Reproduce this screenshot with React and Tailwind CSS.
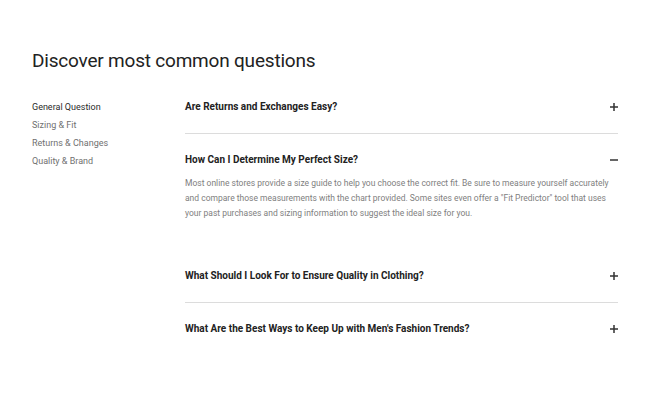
import React, { useState } from 'react';

const faqs = [
  {
    q: 'Are Returns and Exchanges Easy?',
    a: '',
  },
  {
    q: 'How Can I Determine My Perfect Size?',
    a: 'Most online stores provide a size guide to help you choose the correct fit. Be sure to measure yourself accurately and compare those measurements with the chart provided. Some sites even offer a "Fit Predictor" tool that uses your past purchases and sizing information to suggest the ideal size for you.',
  },
  {
    q: 'What Should I Look For to Ensure Quality in Clothing?',
    a: '',
  },
  {
    q: "What Are the Best Ways to Keep Up with Men's Fashion Trends?",
    a: '',
  },
];

const categories = ['General Question', 'Sizing & Fit', 'Returns & Changes', 'Quality & Brand'];

const App = () => {
  const [open, setOpen] = useState(1);

  return (
    <div className="w-[650px] h-[403px] bg-white px-[32px] pt-[48px] font-['Roboto',sans-serif]">
      <h2 className="text-[19px] leading-[26px] text-[#222] tracking-[-0.2px]">
        Discover most common questions
      </h2>

      <div className="grid grid-cols-[153px_1fr] mt-[7px]">
        {/* categories */}
        <ul className="pt-[20px] space-y-[5px]">
          {categories.map((c, i) => (
            <li
              key={c}
              className={`text-[9px] leading-[13px] ${i === 0 ? 'text-[#2a2a2a]' : 'text-[#707070]'}`}
            >
              {c}
            </li>
          ))}
        </ul>

        {/* accordion */}
        <div>
          {faqs.map((f, i) => {
            const isOpen = open === i;
            const last = i === faqs.length - 1;
            return (
              <div
                key={f.q}
                className={`${!isOpen && !last ? 'border-b border-[#dcdcdc]' : ''} ${isOpen ? 'pb-[29px]' : ''}`}
              >
                <button
                  onClick={() => setOpen(isOpen ? -1 : i)}
                  className="w-full flex items-center justify-between py-[20px] text-left"
                >
                  <span className="text-[10px] leading-[12px] font-bold text-[#222]">{f.q}</span>
                  <span className="text-[#333] w-[8px] h-[8px]">
                    {isOpen ? (
                      <svg viewBox="0 0 8 8" className="w-[8px] h-[8px]">
                        <path d="M0 4h8" stroke="currentColor" strokeWidth="1.5" />
                      </svg>
                    ) : (
                      <svg viewBox="0 0 8 8" className="w-[8px] h-[8px]">
                        <path d="M0 4h8M4 0v8" stroke="currentColor" strokeWidth="1.5" />
                      </svg>
                    )}
                  </span>
                </button>
                {isOpen && (
                  <p className="-mt-[10px] text-[8.5px] leading-[15px] text-[#808080]">
                    {f.a}
                  </p>
                )}
              </div>
            );
          })}
        </div>
      </div>
    </div>
  );
};

export default App;
